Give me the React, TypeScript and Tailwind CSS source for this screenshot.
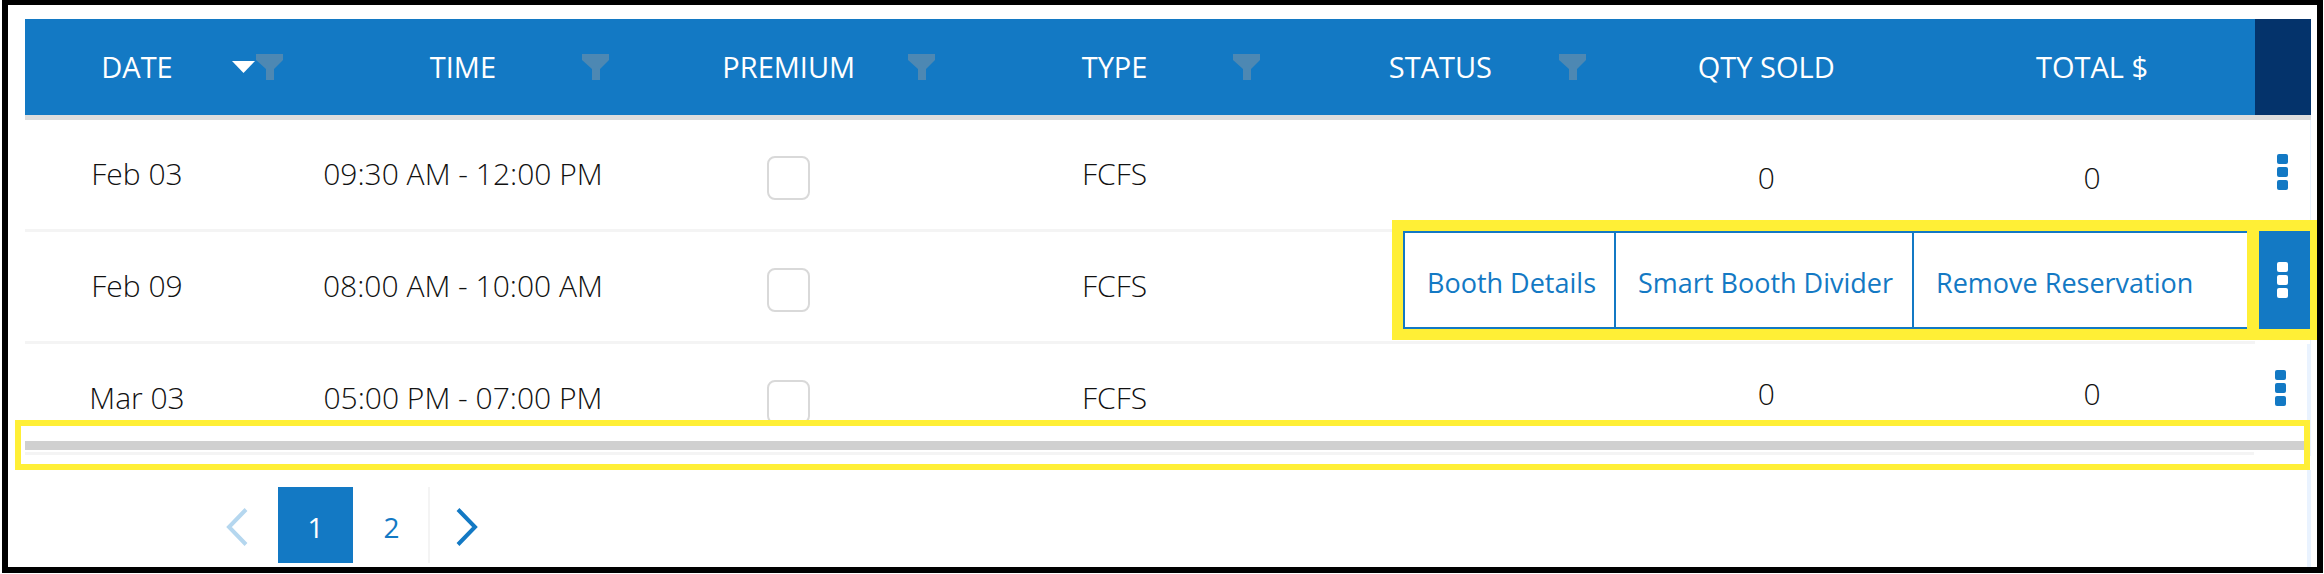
import { useState } from 'react'
import clsx from 'clsx'

interface Reservation {
  id: number
  date: string
  time: string
  type: string
  status?: string
  qty?: number
  total?: number
}

const reservations: Reservation[] = [
  { id: 1, date: 'Feb 03', time: '09:30 AM - 12:00 PM', type: 'FCFS', qty: 0, total: 0 },
  { id: 2, date: 'Feb 09', time: '08:00 AM - 10:00 AM', type: 'FCFS' },
  { id: 3, date: 'Mar 03', time: '05:00 PM - 07:00 PM', type: 'FCFS', qty: 0, total: 0 },
]

const columns = [
  { label: 'DATE', filter: true, sort: true },
  { label: 'TIME', filter: true },
  { label: 'PREMIUM', filter: true },
  { label: 'TYPE', filter: true },
  { label: 'STATUS', filter: true },
  { label: 'QTY SOLD' },
  { label: 'TOTAL $' },
]

function FunnelIcon() {
  return (
    <svg width="27" height="26" viewBox="0 0 27 26" fill="#4d88b3" aria-hidden="true">
      <path d="M0 0h27v6l-9 9v11h-8V15L0 6z" />
    </svg>
  )
}

function SortIcon() {
  return (
    <svg width="23" height="12" viewBox="0 0 23 12" fill="#fff" aria-hidden="true">
      <path d="M0 0h23L11.500 12z" />
    </svg>
  )
}

function DotsIcon() {
  return (
    <svg width="12" height="36" viewBox="0 0 12 36" fill="currentColor" aria-hidden="true">
      <rect x="0" y="0" width="11" height="10" rx="2" />
      <rect x="0" y="13" width="11" height="10" rx="2" />
      <rect x="0" y="26" width="11" height="10" rx="2" />
    </svg>
  )
}

function Chevron({ flip }: { flip?: boolean }) {
  return (
    <svg width="22" height="38" viewBox="0 0 22 38" fill="none" stroke="currentColor" strokeWidth="4" aria-hidden="true">
      <path d={flip ? 'M2 1.500L19 19L2 36.500' : 'M20 1.500L3 19L20 36.500'} />
    </svg>
  )
}

function RowMenu({ onClose }: { onClose: () => void }) {
  const item = 'border-y-2 border-l-2 border-[#1379c4] bg-white pt-1.5 text-left whitespace-nowrap'
  return (
    <div className="absolute -top-3 -right-[7px] z-10 flex h-[120px] w-[925px] border-[11px] border-r-[7px] border-[#ffef36] bg-[#ffef36] text-[27px] font-normal text-[#1379c4]">
      <button className={clsx(item, 'w-[211px] pl-[22px]')}>Booth Details</button>
      <button className={clsx(item, 'w-[298px] pl-[22px]')}>Smart Booth Divider</button>
      <button className={clsx(item, 'flex-1 pl-[22px]')}>Remove Reservation</button>
      <button onClick={onClose} aria-label="Close actions"
        className="ml-3 flex w-[51px] items-center justify-center bg-[#1379c4] pr-1 text-white">
        <DotsIcon />
      </button>
    </div>
  )
}

export default function App() {
  const [openRow, setOpenRow] = useState<number | null>(2)
  const [page, setPage] = useState(1)

  return (
    <div className="flex min-h-screen bg-white pr-px pb-px pl-0.5 font-['Open_Sans','Noto_Sans',sans-serif] text-[29px] leading-10 text-[#111]">
      <div className="min-w-0 flex-1 border-[6px] border-t-[5px] border-black pt-3.5 pr-1.5 pl-[17px]">
        <table className="w-full table-fixed border-separate border-spacing-0 text-center">
          <colgroup>
            <col className="w-[275px]" />
            {columns.slice(1).map((c) => <col key={c.label} />)}
            <col className="w-14" />
          </colgroup>
          <thead>
            <tr className="bg-[#1379c4] text-white">
              {columns.map((c) => (
                <th key={c.label} className="h-[101px] border-b-[5px] border-[#ddd] p-0 font-normal whitespace-nowrap">
                  <div className="flex items-center px-[17px]">
                    {c.filter && !c.sort && <span className="w-[27px]" />}
                    <span className="flex-1">{c.label}</span>
                    {c.sort && <button aria-label={`Sort by ${c.label}`} className="mr-px"><SortIcon /></button>}
                    {c.filter && <button aria-label={`Filter ${c.label}`}><FunnelIcon /></button>}
                  </div>
                </th>
              ))}
              <th aria-label="Actions" className="border-b-[5px] border-[#ddd] bg-[#04336b] p-0" />
            </tr>
          </thead>
          <tbody className="text-[30px] font-light [&_td]:h-28 [&_td]:p-0 [&_td:not(:last-child)]:border-b-[3px] [&_td:not(:last-child)]:border-[#f4f4f4]">
            {reservations.map((r, i) => {
              // figures sit a little low in the first row, a little high in the last
              const shift = i === 0 ? 'pt-1.5' : 'pb-2.5'
              return (
                <tr key={r.id}>
                  <td><div className="pr-[51px] pb-0.5">{r.date}</div></td>
                  <td><div className="pb-0.5">{r.time}</div></td>
                  <td>
                    <div className="flex justify-center pt-1.5">
                      <input type="checkbox" aria-label={`Premium ${r.date}`}
                        className="h-11 w-[43px] appearance-none rounded-lg border-2 border-[#d9d9d9] bg-white checked:bg-[#1379c4]" />
                    </div>
                  </td>
                  <td><div className="pb-0.5">{r.type}</div></td>
                  <td>{r.status}</td>
                  <td><div className={shift}>{r.qty}</div></td>
                  <td><div className={shift}>{r.total}</div></td>
                  <td className={clsx('relative border-r-[#eaf3ff]', i === 2 ? 'border-r-4' : 'border-r')}>
                    <div className={clsx('flex justify-center', i === 0 ? 'pb-2' : 'pb-6')}>
                      <button onClick={() => setOpenRow(r.id)} aria-label={`Actions for ${r.date}`} className="text-[#1379c4]">
                        <DotsIcon />
                      </button>
                    </div>
                    {openRow === r.id && <RowMenu onClose={() => setOpenRow(null)} />}
                  </td>
                </tr>
              )
            })}
          </tbody>
        </table>

        {/* Scroll bar strip, lies over the foot of the last row */}
        <div className="relative -mt-9 mr-px -ml-2.5 h-[50px] border-[6px] border-[#ffef36] bg-white pt-[15px] pl-1">
          <div className="h-[9px] bg-[#d0d0d0]" />
          <div className="mt-0.5 mr-[50px] h-[3px] bg-[#f4f4f4]" />
        </div>

        <nav aria-label="Pages" className="flex h-[97px] items-start border-r-4 border-[#eaf3ff] pt-[17px] pl-[201px] text-[28px] text-[#1379c4]">
          <button aria-label="Previous page" disabled={page === 1} onClick={() => setPage(1)}
            className="flex h-[76px] w-[52px] items-center pt-1 disabled:text-[#b5d7ef]">
            <Chevron />
          </button>
          {[1, 2].map((n) => (
            <button key={n} onClick={() => setPage(n)}
              className={clsx('h-[76px] pt-1', page === n ? 'w-[75px] bg-[#1379c4] text-white' : 'w-[77px] border-r-2 border-[#f4f4f4] pl-0.5')}>
              {n}
            </button>
          ))}
          <button aria-label="Next page" disabled={page === 2} onClick={() => setPage(2)}
            className="ml-[26px] flex h-[76px] items-center pt-1 disabled:text-[#b5d7ef]">
            <Chevron flip />
          </button>
        </nav>
      </div>
    </div>
  )
}
